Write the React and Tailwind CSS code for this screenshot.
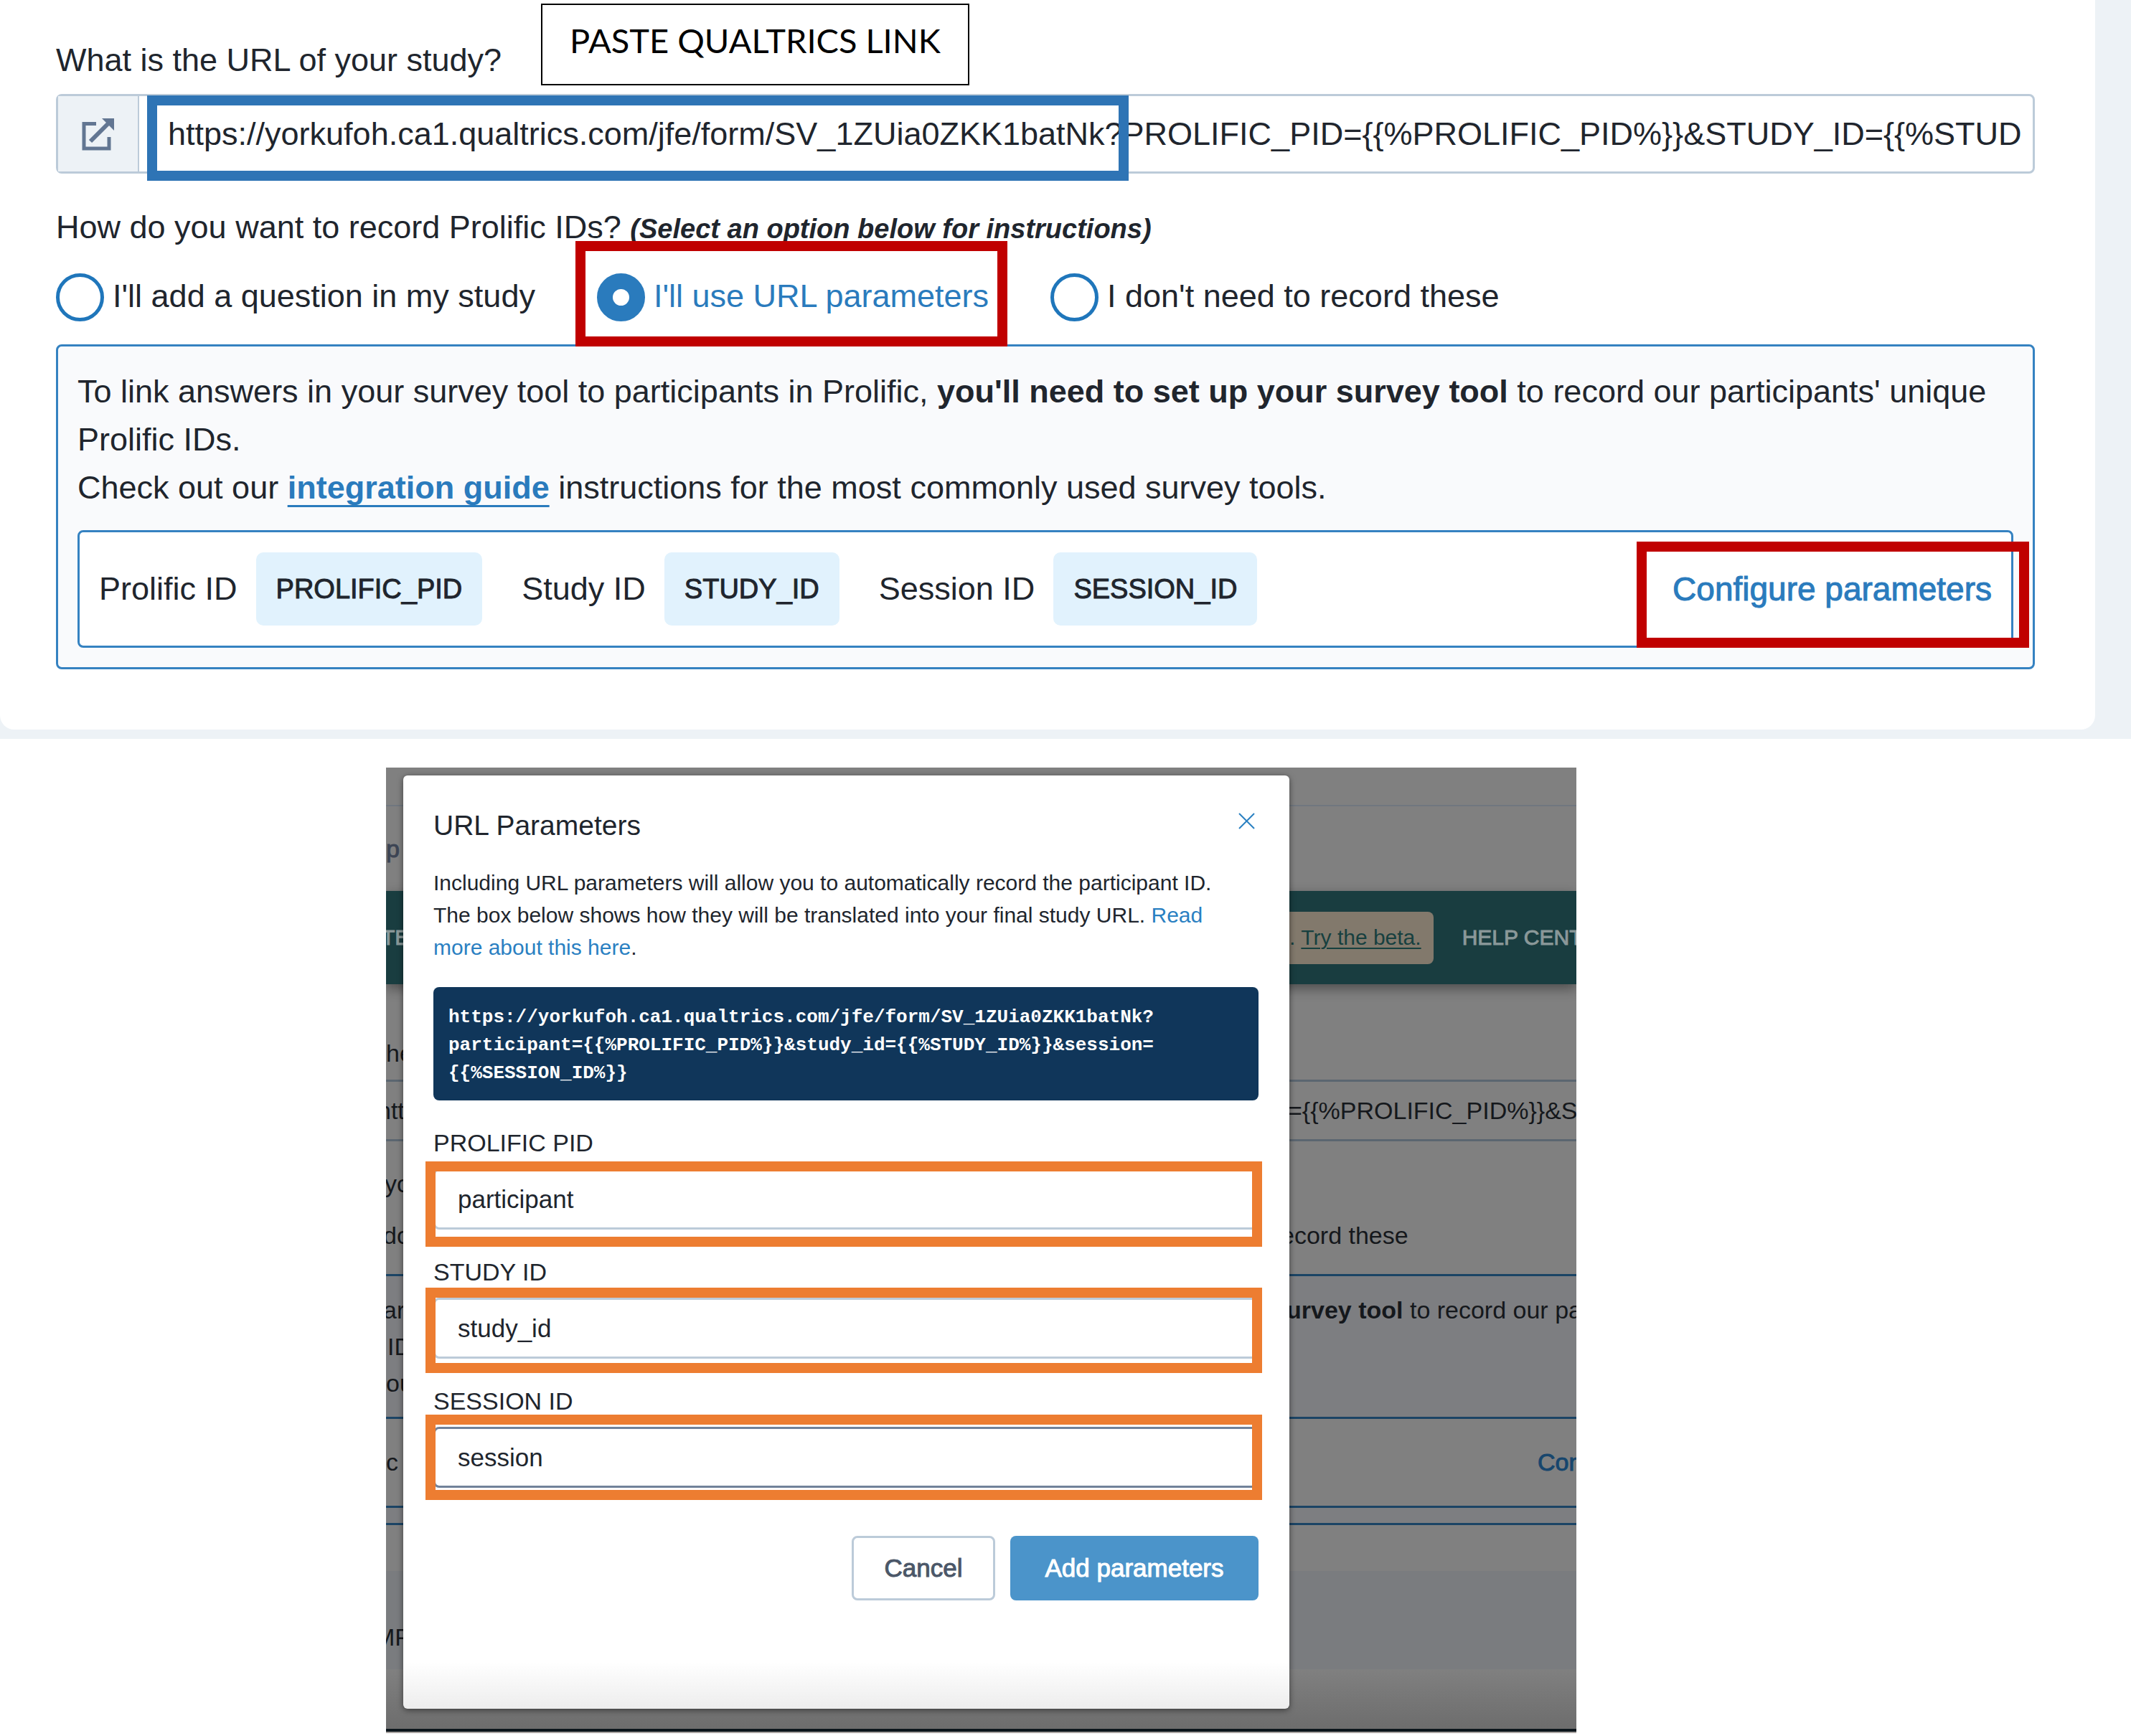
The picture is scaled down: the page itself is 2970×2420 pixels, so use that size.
import React from "react";

const SANS = "font-['Liberation_Sans',Arial,sans-serif]";

function ExternalLinkIcon() {
  return (
    <svg viewBox="0 0 45 46" className="h-[46px] w-[45px]" fill="none" aria-hidden="true">
      <path d="M20 8.5H3v34.500h35V27" stroke="#627692" strokeWidth="5" />
      <path d="M12 33 37 8" stroke="#627692" strokeWidth="6" />
      <path d="M28 1h17v17z" fill="#627692" />
    </svg>
  );
}

function Radio({ id, label, checked, children }) {
  return (
    <div className="relative flex items-center gap-3">
      <input
        type="radio"
        id={id}
        name="record"
        defaultChecked={checked}
        className="size-[67px] appearance-none rounded-full border-[5px] border-[#1f76bb] bg-white checked:border-[22px] checked:border-[#2a7bbd]"
      />
      <label htmlFor={id} className={checked ? "pb-1 text-[#2a7bbd]" : "pb-1"}>
        {label}
      </label>
      {children}
    </div>
  );
}

function Param({ label, value }) {
  return (
    <div className="flex items-center gap-[26px]">
      <span>{label}</span>
      <span className="flex h-[102px] items-center rounded-[10px] bg-[#e1f2fd] px-[28px] text-[38px] [-webkit-text-stroke:1px]">
        {value}
      </span>
    </div>
  );
}

function StudyCard() {
  return (
    <section className="bg-[#edf2f6] pr-[50px] pb-[13px] text-[45px] leading-[60px] text-[#20252d]">
      <div className="rounded-b-[20px] bg-white pt-[5px] pr-[84px] pb-[84px] pl-[78px]">
        <div className="flex items-start gap-[55px]">
          <label htmlFor="study-url" className="pt-[49px]">
            What is the URL of your study?
          </label>
          <div className="h-[114px] border-2 border-black px-[38px] pt-[19px] font-['Lato',sans-serif] text-[47px] text-black">
            PASTE QUALTRICS LINK
          </div>
        </div>

        <div className="relative mt-[12px] flex h-[111px] rounded-[8px] border-[3px] border-[#bccbd9]">
          <div className="flex w-[113px] items-center justify-center border-r-2 border-[#bccbd9] bg-[#edf2f6]">
            <ExternalLinkIcon />
          </div>
          <input
            id="study-url"
            type="text"
            readOnly
            value="https://yorkufoh.ca1.qualtrics.com/jfe/form/SV_1ZUia0ZKK1batNk?PROLIFIC_PID={{%PROLIFIC_PID%}}&STUDY_ID={{%STUD"
            className="min-w-0 flex-1 bg-transparent pr-[10px] pl-[40px] outline-none"
          />
          <div className="pointer-events-none absolute -top-px left-[124px] h-[119px] w-[1368px] border-[14px] border-[#2e74b5]" />
        </div>

        <fieldset>
          <legend className="pt-[45px]">
            How do you want to record Prolific IDs?{" "}
            <em className="text-[38px] font-bold">(Select an option below for instructions)</em>
          </legend>
          <div className="mt-[32px] flex gap-[86px]">
            <Radio id="r1" label="I'll add a question in my study" />
            <Radio id="r2" label="I'll use URL parameters" checked>
              <div className="pointer-events-none absolute -top-[45px] -right-[26px] -left-[30px] z-10 h-[147px] border-[14px] border-[#c00000]" />
            </Radio>
            <Radio id="r3" label="I don't need to record these" />
          </div>
        </fieldset>

        <div className="mt-[32px] rounded-[8px] border-[3px] border-[#3582c1] bg-[#f9fafc] px-[27px] pt-[29px] pb-[27px]">
          <p className="leading-[67px]">
            To link answers in your survey tool to participants in Prolific,{" "}
            <b>you'll need to set up your survey tool</b> to record our participants' unique Prolific IDs.
            <br />
            Check out our{" "}
            <a
              href="#guide"
              className="font-bold text-[#2a7bbd] underline decoration-[3px] underline-offset-[9px] [text-decoration-skip-ink:none]"
            >
              integration guide
            </a>{" "}
            instructions for the most commonly used survey tools.
          </p>
          <div className="relative mt-[26px] flex h-[164px] items-center gap-[55px] rounded-[8px] border-[3px] border-[#3582c1] bg-white px-[27px]">
            <Param label="Prolific ID" value="PROLIFIC_PID" />
            <Param label="Study ID" value="STUDY_ID" />
            <Param label="Session ID" value="SESSION_ID" />
            <button type="button" className="ml-auto text-[46px] text-[#2a7bbd] [-webkit-text-stroke:1px]">
              Configure parameters
            </button>
            <div className="pointer-events-none absolute -right-[25px] top-[13px] h-[148px] w-[547px] border-[14px] border-[#c00000]" />
          </div>
        </div>
      </div>
    </section>
  );
}

function BackRow({ left, leftClass = "", className = "", children }) {
  return (
    <div className={"grid grid-cols-[1fr_400px] items-center whitespace-nowrap " + className}>
      <span className={leftClass}>{left}</span>
      <div className="flex items-center overflow-visible">{children}</div>
    </div>
  );
}

function DimmedPage() {
  return (
    <div className="col-start-1 row-start-1 overflow-hidden bg-[#808080] text-[34px] leading-[50px] text-[#15181c]">
      <div className="h-[54px] border-b-2 border-[#70777f]" />
      <BackRow left="p" leftClass="text-[#3d4554] [-webkit-text-stroke:1px]" className="h-[118px]" />
      <BackRow
        left="TE"
        leftClass="-ml-1.5 [-webkit-text-stroke:1px]"
        className="relative h-[130px] bg-[#193d40] text-[30px] text-[#8a9899] shadow-[0_6px_16px_rgba(0,0,0,0.4)]"
      >
        <div className="flex h-[73px] items-center gap-[8px] rounded-r-[8px] bg-[#82796c] pr-[17px] text-[#17403f]">
          <span>.</span>
          <a href="#beta" className="underline decoration-2 underline-offset-4">
            Try the beta.
          </a>
        </div>
        <a href="#help" className="ml-[40px] [-webkit-text-stroke:1px]">
          HELP CENT
        </a>
      </BackRow>
      <BackRow left="he" className="h-[133px] content-end pb-[12px]" />
      <BackRow left="htt" leftClass="-ml-3" className="h-[86px] border-y-[3px] border-[#5b6670]">
        <input
          type="text"
          readOnly
          aria-label="Study URL"
          value="={{%PROLIFIC_PID%}}&ST"
          className="-ml-0.5 w-[402px] outline-none"
        />
      </BackRow>
      <BackRow left="yo" leftClass="-ml-0.5" className="mt-[34px]" />
      <BackRow left="do" leftClass="-ml-1" className="mt-[22px]">
        <span className="-ml-[12px]">ecord these</span>
      </BackRow>
      <div className="mt-[29px] border-y-[3px] border-[#1b4465] bg-[#7d7e81] pt-[22px] pb-[21px] leading-[51px]">
        <BackRow left="ar" leftClass="-ml-1">
          <span className="-ml-1 whitespace-pre">
            <b>urvey tool</b> to record our pa
          </span>
        </BackRow>
        <BackRow left="ID" leftClass="pl-0.5" />
        <BackRow left="ou" />
        <BackRow left="c" className="mt-[21px] h-[127px] border-y-[3px] border-[#1b4465] bg-[#808080]">
          <span className="ml-[346px] text-[#17466d] [-webkit-text-stroke:1px]">Con</span>
        </BackRow>
      </div>
      <BackRow left="MP" leftClass="-ml-4" className="mt-[64px] h-[137px] content-end bg-[#7a7c7f] pb-[20px]" />
      <div className="h-[83px] bg-linear-to-b from-[#808080] to-[#6d6d6d]" />
      <div className="h-[4px] bg-[#0c151b]" />
      <div className="h-[2px] bg-[#a9a4a2]" />
    </div>
  );
}

function Field({ id, label, value, inputClass, markClass }) {
  return (
    <div className="mt-[37px] text-[34px]">
      <label htmlFor={id} className="block leading-[45px]">
        {label}
      </label>
      <div className="relative mt-[13px]">
        <input
          id={id}
          type="text"
          defaultValue={value}
          className={
            "block h-[85px] w-full rounded-[8px] border-[3px] bg-white px-[31px] text-[35px] outline-none " + inputClass
          }
        />
        <div
          className={
            "pointer-events-none absolute -right-[5px] -left-[11px] h-[119px] border-[14px] border-[#ed7d31] " +
            markClass
          }
        />
      </div>
    </div>
  );
}

function ParametersDialog() {
  return (
    <div
      role="dialog"
      aria-labelledby="dialog-title"
      className="relative col-start-1 row-start-1 mt-[11px] mr-[400px] mb-[34px] ml-[24px] rounded-[6px] bg-white bg-linear-to-b from-white from-95% to-[#ededed] pt-[46px] pr-[43px] pl-[42px] shadow-[0_2px_8px_rgba(0,0,0,0.5)]"
    >
      <div className="flex items-center justify-between">
        <h2 id="dialog-title" className="text-[39px] leading-[48px]">
          URL Parameters
        </h2>
        <button type="button" aria-label="Close" className="mr-[5px] mb-[14px]">
          <svg viewBox="0 0 23 23" className="size-[23px]" fill="none" stroke="#2a80c2" strokeWidth="2">
            <path d="M1 1l21 21M22 1L1 22" />
          </svg>
        </button>
      </div>
      <p className="mt-[33px] text-[30px] leading-[45px]">
        Including URL parameters will allow you to automatically record the participant ID.
        <br />
        The box below shows how they will be translated into your final study URL.{" "}
        <a href="#more" className="text-[#2a80c2]">
          Read
          <br />
          more about this here
        </a>
        .
      </p>
      <code className="mt-[33px] block rounded-[8px] bg-[#10365a] px-[21px] pt-[23px] pb-[18px] font-['Liberation_Mono',monospace] text-[26px] leading-[39px] font-bold text-white">
        https://yorkufoh.ca1.qualtrics.com/jfe/form/SV_1ZUia0ZKK1batNk?
        <br />
        {"participant={{%PROLIFIC_PID%}}&study_id={{%STUDY_ID%}}&session="}
        <br />
        {"{{%SESSION_ID%}}"}
      </code>
      <Field id="pid" label="PROLIFIC PID" value="participant" inputClass="border-[#bccbd9]" markClass="-top-[10px]" />
      <Field id="sid" label="STUDY ID" value="study_id" inputClass="border-[#bccbd9]" markClass="-top-[14px]" />
      <Field id="ses" label="SESSION ID" value="session" inputClass="border-[#71829a]" markClass="-top-[17px]" />
      <div className="mt-[67px] flex justify-end gap-[21px] text-[35px]">
        <button
          type="button"
          className="h-[90px] w-[200px] rounded-[8px] border-[3px] border-[#bccbd9] bg-white text-[#4b5768] [-webkit-text-stroke:1px]"
        >
          Cancel
        </button>
        <button
          type="button"
          className="h-[90px] w-[346px] rounded-[8px] bg-[#4b94ca] text-white [-webkit-text-stroke:1px]"
        >
          Add parameters
        </button>
      </div>
    </div>
  );
}

export default function App() {
  return (
    <main className={"bg-white pb-[6px] text-[#20252d] " + SANS}>
      <StudyCard />
      <section className="mt-[40px] ml-[538px] grid max-w-[1659px] overflow-hidden">
        <DimmedPage />
        <ParametersDialog />
      </section>
    </main>
  );
}
